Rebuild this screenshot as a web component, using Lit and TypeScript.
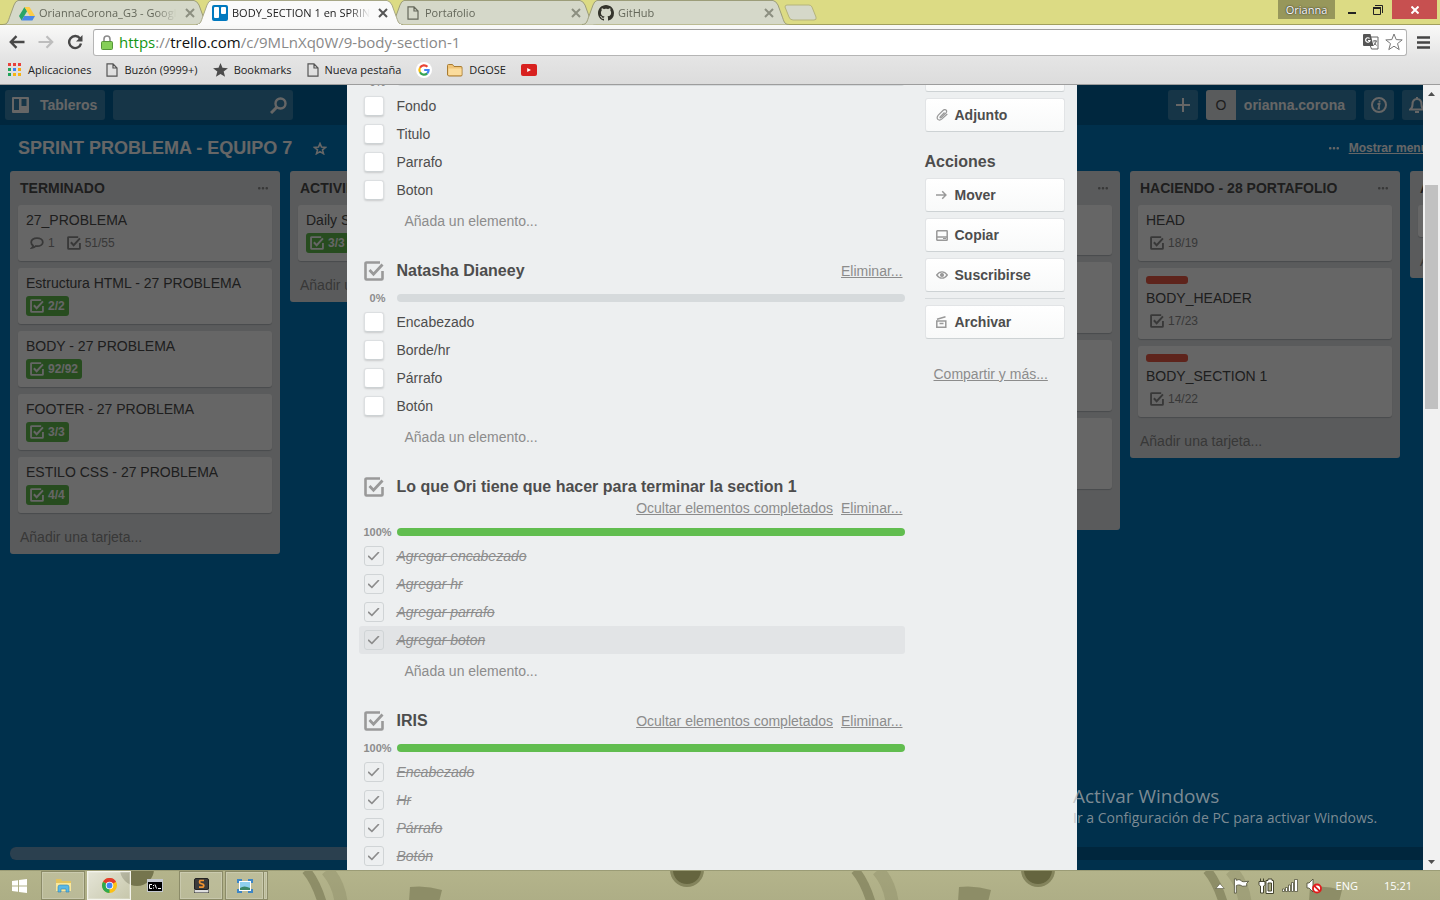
import { LitElement, html, css, svg, nothing } from "lit";
import { customElement, property } from "lit/decorators.js";
import { classMap } from "lit/directives/class-map.js";
import { styleMap } from "lit/directives/style-map.js";

const checkIcon = (size: number) => html`
  <svg width=${size} height=${size} viewBox="0 0 20 20" fill="none" stroke="currentColor" aria-hidden="true">
    <path stroke-width="2.600" stroke-linejoin="round" d="M16 1.500H2.500a1 1 0 0 0-1 1v15a1 1 0 0 0 1 1h15a1 1 0 0 0 1-1V10" />
    <path stroke-width="2.800" d="M5.500 9l4 4.200L18.500 3.500" />
  </svg>`;

const dotsIcon = html`
  <svg width="10" height="3" viewBox="0 0 10 3" fill="currentColor" aria-hidden="true">
    <rect width="2.500" height="2.500" x="0" y="0" rx="1" /><rect width="2.500" height="2.500" x="3.750" y="0" rx="1" /><rect width="2.500" height="2.500" x="7.500" y="0" rx="1" />
  </svg>`;

const closeIcon = html`
  <svg width="10" height="10" viewBox="0 0 10 10" fill="none" stroke="currentColor" stroke-width="2" aria-hidden="true">
    <path d="M1 1l8 8M9 1L1 9" />
  </svg>`;

const pageIcon = html`
  <svg width="12" height="14" viewBox="0 0 12 14" fill="none" stroke="currentColor" stroke-width="1.200" aria-hidden="true">
    <path d="M1 .8h6L11 5v8.200H1zM7 .8V5h4" />
  </svg>`;

/* ---------- Browser frame ---------- */

interface Tab { icon: unknown; title: string; active?: boolean; }

const driveIcon = html`
  <svg width="16" height="15" viewBox="0 0 16 15" aria-hidden="true">
    <path fill="#2aa567" d="M5.500 1L0 10l2.600 4.400L8.200 5z" />
    <path fill="#fccd48" d="M5.500 1h5L16 10h-5.200z" />
    <path fill="#4b87e8" d="M5.200 10H16l-2.600 4.400H2.600z" />
  </svg>`;
const trelloIcon = html`
  <svg width="16" height="16" viewBox="0 0 16 16" aria-hidden="true">
    <rect width="16" height="16" rx="2" fill="#0079bf" />
    <rect x="2" y="2" width="5" height="11" rx="1" fill="#fff" /><rect x="9" y="2" width="5" height="7" rx="1" fill="#fff" />
  </svg>`;
const githubIcon = html`
  <svg width="16" height="16" viewBox="0 0 16 16" fill="#34342c" aria-hidden="true">
    <path d="M8 0C3.58 0 0 3.58 0 8c0 3.54 2.29 6.53 5.47 7.59.4.07.55-.17.55-.38 0-.19-.01-.82-.01-1.49-2.01.37-2.53-.49-2.69-.94-.09-.23-.48-.94-.82-1.13-.28-.15-.68-.52-.01-.53.63-.01 1.08.58 1.23.82.72 1.21 1.87.87 2.33.66.07-.52.28-.87.51-1.07-1.78-.2-3.64-.89-3.64-3.95 0-.87.31-1.59.82-2.15-.08-.2-.36-1.02.08-2.12 0 0 .67-.21 2.2.82.64-.18 1.32-.27 2-.27s1.36.09 2 .27c1.53-1.04 2.2-.82 2.2-.82.44 1.1.16 1.92.08 2.12.51.56.82 1.27.82 2.15 0 3.07-1.87 3.75-3.65 3.95.29.25.54.73.54 1.48 0 1.07-.01 1.93-.01 2.2 0 .21.15.46.55.38A8.01 8.01 0 0 0 16 8c0-4.42-3.58-8-8-8z" />
  </svg>`;

const TABS: Tab[] = [
  { icon: driveIcon, title: "OriannaCorona_G3 - Google Drive" },
  { icon: trelloIcon, title: "BODY_SECTION 1 en SPRINT", active: true },
  { icon: pageIcon, title: "Portafolio" },
  { icon: githubIcon, title: "GitHub" },
];

const appsIcon = html`
  <svg width="14" height="14" viewBox="0 0 14 14" aria-hidden="true">
    <g fill="#e8413b"><rect width="3" height="3" /><rect x="5" width="3" height="3" /><rect x="10" width="3" height="3" /><rect x="10" y="5" width="3" height="3" fill="#f6a914" /></g>
    <g fill="#21a45a"><rect y="5" width="3" height="3" /><rect y="10" width="3" height="3" /></g>
    <rect x="5" y="5" width="3" height="3" fill="#3b83f6" />
    <g fill="#f6b414"><rect x="5" y="10" width="3" height="3" /><rect x="10" y="10" width="3" height="3" /></g>
  </svg>`;
const starIcon = html`
  <svg width="15" height="14" viewBox="0 0 16 15" fill="#4c4c4c" aria-hidden="true">
    <path d="M8 0l2.100 5.200 5.900.4-4.600 3.600 1.500 5.600L8 11.700l-4.900 3.100 1.500-5.600L0 5.600l5.900-.4z" />
  </svg>`;
const googleIcon = html`
  <svg width="16" height="16" viewBox="0 0 16 16" fill="none" stroke-width="2.200" aria-hidden="true">
    <circle cx="8" cy="8" r="8" fill="#fff" />
    <path stroke="#e94435" d="M11.400 4.800A4.600 4.600 0 0 0 4 5.800" /><path stroke="#fabb08" d="M4 5.800a4.600 4.600 0 0 0 0 4.500" />
    <path stroke="#34a453" d="M4 10.300a4.600 4.600 0 0 0 7.200 1.100" /><path stroke="#4284f3" d="M11.200 11.400A4.600 4.600 0 0 0 12.600 8H8.200" />
  </svg>`;
const folderIcon = html`
  <svg width="16" height="14" viewBox="0 0 16 14" aria-hidden="true">
    <path fill="#f0c478" stroke="#a87c32" d="M.5 12V2.500a1 1 0 0 1 1-1h4l1.500 2h7a1 1 0 0 1 1 1V12a1 1 0 0 1-1 1h-12a1 1 0 0 1-1-1z" />
    <path fill="#fbdc9c" d="M1.500 5.500h13V12h-13z" />
  </svg>`;
const youtubeIcon = html`
  <svg width="16" height="12" viewBox="0 0 16 12" aria-hidden="true">
    <rect width="16" height="12" rx="2" fill="#d8211f" /><path d="M6.200 4v4L10 6z" fill="#fff" />
  </svg>`;

@customElement("browser-frame")
export class BrowserFrame extends LitElement {
  static styles = css`
    :host { display: block; font: 11px/16px "Open Sans", "Noto Sans", sans-serif; color: #111; }
    button { border: 0; margin: 0; padding: 0; background: none; color: inherit; font: inherit; display: flex; align-items: center; justify-content: center; }
    svg { display: block; flex: none; }
    .strip { display: flex; height: 25px; background: #dcdb84; box-shadow: inset 0 -1px #a19f5d; padding-left: 3px; }
    .tab { display: grid; width: 207px; height: 25px; margin-right: -14px; color: #64675a; }
    .tab.active { position: relative; z-index: 1; color: #222; }
    .shape, .label { grid-area: 1 / 1; min-width: 0; }
    .label { display: flex; align-items: center; gap: 4px; padding: 1px 15px 0 16px; }
    .favicon { width: 16px; display: flex; justify-content: center; flex: none; }
    .title { flex: 1; min-width: 0; overflow: hidden; white-space: nowrap; mask-image: linear-gradient(to right, #000 82%, transparent 97%); color: inherit; text-decoration: none; }
    .close { color: #8c8f80; }
    .active .close { color: #555; }
    .new { align-self: flex-start; margin: 4px 0 0 9px; }
    .controls { display: flex; margin-left: auto; align-items: flex-start; padding-right: 3px; }
    .who { width: 57px; height: 19px; background: #97975b; color: #fff; text-shadow: 0 0 2px #333, 0 0 1px #333; }
    .win { width: 26px; height: 19px; margin-left: 4px; color: #222; }
    .win.restore { margin-left: 0; }
    .win.quit { width: 45px; margin-left: 1px; background: #c75050; color: #fff; }
    .bar { display: flex; align-items: center; height: 34px; padding: 0 8px 0 6px; background: linear-gradient(#f9f9f8, #e4e4e4); gap: 7px; }
    .nav { width: 22px; height: 22px; color: #484848; }
    .nav.off { color: #bdbdbd; }
    .omnibox { flex: 1; display: flex; align-items: center; height: 27px; box-sizing: border-box; border: 1px solid #b5b5b5; border-top-color: #9f9f9f; border-radius: 3px; background: #fff; padding: 0 3px 0 7px; gap: 6px; }
    .url { flex: 1; font-size: 15px; line-height: 20px; white-space: nowrap; color: #888; text-decoration: none; }
    .secure { color: #149614; }
    .domain { color: #111; }
    .menu { width: 18px; height: 22px; color: #444; }
    .marks { display: flex; align-items: center; height: 26px; box-sizing: border-box; padding: 0 8px 3px; background: linear-gradient(#e4e4e4, #dcdcdc); border-bottom: 1px solid #9d9d9d; gap: 15px; }
    .mark { display: flex; align-items: center; gap: 6px; color: #222; text-decoration: none; white-space: nowrap; }
    .doc { color: #555; display: flex; }
  `;

  private tab(t: Tab) {
    return html`
      <div class=${classMap({ tab: true, active: !!t.active })}>
        <svg class="shape" width="207" height="25" viewBox="0 0 207 25" aria-hidden="true">
          <path d="M0 24.500C5 24.500 5 21 7 16L11 5Q12.500 1 15 .5H191Q194 1 196 5L200 16C202 21 202 24.500 207 24.500"
            fill=${t.active ? "#fafafa" : "#d5d8c9"} stroke=${t.active ? "#a8a887" : "#9c9d79"} />
          ${t.active ? svg`<path d="M2 24.500H205" stroke="#fafafa" />` : nothing}
        </svg>
        <div class="label">
          <span class="favicon">${t.icon}</span><a class="title" href="#">${t.title}</a>
          <button class="close" aria-label="Cerrar">${closeIcon}</button>
        </div>
      </div>`;
  }

  render() {
    return html`
      <div class="strip">
        ${TABS.map((t) => this.tab(t))}
        <button class="new" aria-label="Nueva">
          <svg width="34" height="17" viewBox="0 0 34 17"><path d="M3 1h22q2 0 3 2l4 10q1 3-2 3H9q-3 0-4-3L1 3Q1 1 3 1z" fill="#d5d8c9" stroke="#b5b47c" /></svg>
        </button>
        <div class="controls">
          <button class="who">Orianna</button>
          <button class="win" aria-label="Minimizar"><svg width="8" height="10"><path d="M0 7h8v2H0z" fill="currentColor" /></svg></button>
          <button class="win restore" aria-label="Restaurar">
            <svg width="10" height="10" viewBox="0 0 10 10" fill="none" stroke="currentColor"><path d="M2 .5h7.500V8M.5 3h7v6.500h-7z" /><path d="M0 3h8" stroke-width="2" /></svg>
          </button>
          <button class="win quit" aria-label="Salir"><svg width="8" height="8" viewBox="0 0 8 8" stroke="currentColor" stroke-width="2"><path d="M.5 .5l7 7M7.500 .5l-7 7" /></svg></button>
        </div>
      </div>
      <div class="bar">
        <button class="nav" aria-label="Atrás"><svg width="16" height="14" viewBox="0 0 16 14" fill="none" stroke="currentColor" stroke-width="2.400"><path d="M15.500 7H2M7.500 1.200L1.800 7l5.700 5.800" /></svg></button>
        <button class="nav off" aria-label="Adelante"><svg width="16" height="14" viewBox="0 0 16 14" fill="none" stroke="currentColor" stroke-width="2.200"><path d="M.5 7H14M8.500 1.200L14.200 7l-5.700 5.800" /></svg></button>
        <button class="nav" aria-label="Recargar"><svg width="16" height="16" viewBox="0 0 16 16"><path d="M13 4.500A6 6 0 1 0 14 9.500" fill="none" stroke="currentColor" stroke-width="2.400" /><path d="M15.500 1v6.500H9z" fill="currentColor" /></svg></button>
        <div class="omnibox">
          <svg width="12" height="15" viewBox="0 0 12 15" aria-hidden="true"><path d="M3 7V4a3 3 0 0 1 6 0v3" fill="none" stroke="#8c8c8c" stroke-width="1.600" /><rect x=".5" y="6.500" width="11" height="8" rx="1" fill="#85cf58" stroke="#56963a" /></svg>
          <a class="url" href="#"><span class="secure">https</span>://<span class="domain">trello.com</span>/c/9MLnXq0W/9-body-section-1</a>
          <svg width="16" height="16" viewBox="0 0 16 16" aria-hidden="true">
            <path d="M7.500 3H15v12H8.500L7 11z" fill="#fff" stroke="#666" /><path d="M0 1q0-1 1-1h6.500l3 12H1q-1 0-1-1z" fill="#555" />
            <path d="M6.500 4.500A2.200 2.200 0 1 0 7 6.500H5" fill="none" stroke="#fff" stroke-width="1.200" /><path d="M10 7h4M12 6v1M13.300 7q-.5 3-3 4.500M11 8.500l2.500 3" fill="none" stroke="#666" />
          </svg>
          <svg width="18" height="18" viewBox="0 0 18 18" aria-hidden="true"><path d="M9 1l2.200 5.600 6 .3-4.700 3.700 1.700 6L9 13.200l-5.200 3.400 1.700-6L.8 6.900l6-.3z" fill="#fff" stroke="#777" stroke-linejoin="round" /></svg>
        </div>
        <button class="menu" aria-label="Menú"><svg width="13" height="13" viewBox="0 0 13 13"><path d="M0 1.500h13M0 6.500h13M0 11.500h13" stroke="currentColor" stroke-width="2.600" /></svg></button>
      </div>
      <nav class="marks">
        <a class="mark" href="#">${appsIcon}Aplicaciones</a>
        <a class="mark" href="#"><span class="doc">${pageIcon}</span>Buzón (9999+)</a>
        <a class="mark" href="#">${starIcon}Bookmarks</a>
        <a class="mark" href="#"><span class="doc">${pageIcon}</span>Nueva pestaña</a>
        <a class="mark" href="#" aria-label="Google">${googleIcon}</a>
        <a class="mark" href="#">${folderIcon}DGOSE</a>
        <a class="mark" href="#" aria-label="YouTube">${youtubeIcon}</a>
      </nav>`;
  }
}

/* ---------- Board ---------- */

interface Card { title?: string; comments?: number; tasks?: string; done?: boolean; label?: boolean; height?: number; }
interface List { name: string; cards: Card[]; }

const LISTS: List[] = [
  { name: "TERMINADO", cards: [
    { title: "27_PROBLEMA", comments: 1, tasks: "51/55" },
    { title: "Estructura HTML - 27 PROBLEMA", tasks: "2/2", done: true },
    { title: "BODY - 27 PROBLEMA", tasks: "92/92", done: true },
    { title: "FOOTER - 27 PROBLEMA", tasks: "3/3", done: true },
    { title: "ESTILO CSS - 27 PROBLEMA", tasks: "4/4", done: true },
  ] },
  { name: "ACTIVIDADES", cards: [{ title: "Daily Scrum", tasks: "3/3", done: true }] },
  { name: "", cards: [{ height: 50 }] },
  { name: "", cards: [{ height: 50 }, { height: 71 }, { height: 71 }, { height: 71 }] },
  { name: "HACIENDO - 28 PORTAFOLIO", cards: [
    { title: "HEAD", tasks: "18/19" },
    { title: "BODY_HEADER", tasks: "17/23", label: true },
    { title: "BODY_SECTION 1", tasks: "14/22", label: true },
  ] },
  { name: "A", cards: [{ height: 32 }] },
];

@customElement("trello-board")
export class TrelloBoard extends LitElement {
  static styles = css`
    :host { display: flex; flex-direction: column; min-width: 0; overflow: hidden; background: #0079bf; color: #4d4d4d; font: 14px/18px "Liberation Sans", Arial, sans-serif; }
    button { border: 0; margin: 0; padding: 0; background: none; color: inherit; font: inherit; display: flex; align-items: center; }
    svg { display: block; flex: none; }
    a { color: inherit; }
    .top { display: flex; align-items: center; justify-content: space-between; height: 40px; padding: 0 8px 0 5px; background: rgba(0, 0, 0, .18); color: #fff; font-weight: 700; }
    .side { display: flex; gap: 8px; }
    .pill { height: 30px; border-radius: 3px; background: rgba(255, 255, 255, .22); color: #fff; overflow: hidden; }
    .boards { gap: 11px; padding: 0 8px 0 7px; }
    .search { display: flex; align-items: center; width: 180px; box-sizing: border-box; padding-right: 6px; }
    .query { flex: 1; min-width: 0; border: 0; padding: 0 8px; height: 30px; background: none; color: #fff; font: inherit; outline: 0; }
    .square { width: 30px; justify-content: center; }
    .member { padding-right: 11px; gap: 8px; }
    .avatar { width: 30px; height: 30px; line-height: 30px; text-align: center; background: #dfe3e6; color: #4d4d4d; font-weight: 400; }
    .head { display: flex; align-items: center; height: 46px; padding: 0 12px 0 18px; color: #fff; }
    h1 { margin: 0; font-size: 18px; line-height: 24px; font-weight: 700; }
    .star { margin-left: 21px; }
    .show { margin-left: auto; display: flex; align-items: center; gap: 10px; font-size: 12px; font-weight: 700; }
    .lists { flex: 1; min-height: 0; display: flex; align-items: flex-start; gap: 10px; padding-left: 10px; }
    .list { flex: none; width: 270px; border-radius: 3px; background: #e2e4e6; }
    .list-head { display: flex; align-items: center; justify-content: space-between; height: 34px; padding: 0 12px 0 10px; }
    .dots { color: #8c8c8c; }
    h2 { margin: 0; font-size: 14px; line-height: 18px; font-weight: 700; }
    .cards { display: flex; flex-direction: column; gap: 7px; padding: 0 8px; }
    .card { box-sizing: border-box; border-radius: 3px; background: #fff; box-shadow: 0 1px 1px #b6bbbf; padding: 6px 8px 8px; }
    .label { width: 42px; height: 8px; margin: 2px 0 5px; border-radius: 3px; background: #eb5a46; }
    .badges { display: flex; gap: 4px; margin-top: 4px; font-size: 12px; line-height: 20px; color: #8c8c8c; }
    .badge { display: flex; align-items: center; gap: 4px; padding: 0 4px; border-radius: 3px; }
    .badge.done { background: #61bd4f; color: #fff; font-weight: 700; }
    .add { height: 41px; padding: 7px 10px 0; color: #8c8c8c; }
    .scroll { flex: none; height: 13px; margin: 0 10px 10px; border-radius: 6px; background: rgba(0, 0, 0, .2); }
    .thumb { width: 60%; height: 100%; border-radius: 6px; background: #6da0c5; }
  `;

  private card(c: Card) {
    if (c.height) return html`<div class="card" style=${styleMap({ height: `${c.height}px` })}></div>`;
    return html`
      <div class="card">
        ${c.label ? html`<div class="label"></div>` : nothing}
        <div>${c.title}</div>
        <div class="badges">
          ${c.comments ? html`<span class="badge"><svg width="14" height="12" viewBox="0 0 14 12" fill="none" stroke="currentColor" stroke-width="1.800"><path d="M7 1.200c3.300 0 5.800 1.700 5.800 4s-2.500 4-5.800 4H5.500Q4.500 10.500 2 10.800 3.300 9.500 3 8.500C1.800 7.700 1.200 6.500 1.200 5.200c0-2.300 2.500-4 5.800-4z" /></svg>${c.comments}</span>` : nothing}
          <span class=${classMap({ badge: true, done: !!c.done })}>${checkIcon(14)}${c.tasks}</span>
        </div>
      </div>`;
  }

  render() {
    return html`
      <header class="top">
        <div class="side">
          <button class="pill boards">
            <svg width="17" height="16" viewBox="0 0 17 16"><path fill="#fff" fill-rule="evenodd" d="M1 0h15q1 0 1 1v14q0 1-1 1H1q-1 0-1-1V1q0-1 1-1zM2 2v11h5V2zM9.500 2v7h5V2z" /></svg>Tableros
          </button>
          <div class="pill search">
            <input class="query" type="text" aria-label="Buscar" />
            <svg width="17" height="17" viewBox="0 0 17 17" fill="none" stroke="#fff" stroke-width="2.400"><circle cx="10.500" cy="6.500" r="5" /><path d="M7 10L1 16" stroke-width="3" /></svg>
          </div>
        </div>
        <div class="side">
          <button class="pill square" aria-label="Crear"><svg width="14" height="14" viewBox="0 0 14 14" stroke="#fff" stroke-width="2"><path d="M7 0v14M0 7h14" /></svg></button>
          <button class="pill member"><span class="avatar">O</span>orianna.corona</button>
          <button class="pill square" aria-label="Información">
            <svg width="16" height="16" viewBox="0 0 16 16" fill="none" stroke="#fff" stroke-width="2"><circle cx="8" cy="8" r="7" /><path d="M6.500 7H8.500L7.500 11.500H9M8.500 3.500V5.500" stroke-width="1.800" /></svg>
          </button>
          <button class="pill square" aria-label="Notificaciones">
            <svg width="16" height="16" viewBox="0 0 16 16" fill="none" stroke="#fff" stroke-width="2"><path d="M1 12.500h14Q12.500 11 12.500 7.500C12.500 4 11 2 8 2S3.500 4 3.500 7.500Q3.500 11 1 12.500zM6 15h4M8 0v2" /></svg>
          </button>
        </div>
      </header>
      <div class="head">
        <h1>SPRINT PROBLEMA - EQUIPO 7</h1>
        <button class="star" aria-label="Favorito"><svg width="14" height="13" viewBox="0 0 14 13" fill="none" stroke="#fff" stroke-width="1.600"><path d="M7 1.500l1.500 3.600 4 .3-3 2.500 1 3.800L7 9.600l-3.500 2.100 1-3.800-3-2.500 4-.3z" /></svg></button>
        <span class="show">${dotsIcon}<a href="#">Mostrar menú</a></span>
      </div>
      <div class="lists">
        ${LISTS.map((l) => html`
          <section class="list">
            <div class="list-head"><h2>${l.name}</h2><button class="dots" aria-label="Opciones">${dotsIcon}</button></div>
            <div class="cards">${l.cards.map((c) => this.card(c))}</div>
            <button class="add">${l.name ? "Añadir una tarjeta..." : nothing}</button>
          </section>`)}
      </div>
      <div class="scroll"><div class="thumb"></div></div>`;
  }
}

/* ---------- Card window ---------- */

interface Checklist { name?: string; percent: number; items: string[]; hovered?: number; }

const CHECKLISTS: Checklist[] = [
  { percent: 0, items: ["Fondo", "Titulo", "Parrafo", "Boton"] },
  { name: "Natasha Dianeey", percent: 0, items: ["Encabezado", "Borde/hr", "Párrafo", "Botón"] },
  { name: "Lo que Ori tiene que hacer para terminar la section 1", percent: 100, hovered: 3,
    items: ["Agregar encabezado", "Agregar hr", "Agregar parrafo", "Agregar boton"] },
  { name: "IRIS", percent: 100, items: ["Encabezado", "Hr", "Párrafo", "Botón"] },
];

const clipIcon = html`<svg width="12" height="12" viewBox="0 0 12 12" fill="none" stroke="currentColor" stroke-width="1.200"><path d="M8.500 3.500L4.200 7.800q-.5 1 .3 1 .5 0 1-.5L10 3.800q1.300-1.700 0-2.800-1.400-1-2.800.3L2.300 6.200q-2 2.400-.5 4.200 1.800 1.500 4.200-.5L11.300 5" /></svg>`;
const arrowIcon = html`<svg width="11" height="10" viewBox="0 0 12 10" fill="none" stroke="currentColor" stroke-width="1.600"><path d="M0 5h10.500M6.800 1L10.800 5 6.800 9" /></svg>`;
const copyIcon = html`<svg width="12" height="11" viewBox="0 0 12 11" fill="none" stroke="currentColor" stroke-width="1.500"><rect x=".8" y=".8" width="10.400" height="9.400" rx=".5" /><path d="M1 7h10" /><path d="M7 8.500h3" stroke-width="1" /></svg>`;
const eyeIcon = html`<svg width="12" height="8" viewBox="0 0 12 8" fill="none" stroke="currentColor" stroke-width="1.300"><path d="M.7 4Q3 .8 6 .8T11.300 4Q9 7.200 6 7.200T.7 4z" /><circle cx="6" cy="4" r="1.400" fill="currentColor" /></svg>`;
const archiveIcon = html`<svg width="11" height="12" viewBox="0 0 11 12" fill="none" stroke="currentColor" stroke-width="1.500"><path d="M1 3.200L9.500 .8M.8 5h9v6.200h-9zM3.500 7.500h4" /></svg>`;

@customElement("card-window")
export class CardWindow extends LitElement {
  @property({ attribute: false }) lists: Checklist[] = CHECKLISTS;

  static styles = css`
    :host { display: block; width: 730px; margin: 0 auto; overflow: hidden; background: #edeff0; color: #4d4d4d; font: 14px/18px "Liberation Sans", Arial, sans-serif; }
    svg { display: block; flex: none; }
    .scrolled { display: flex; gap: 20px; margin-top: -27px; padding: 0 12px; }
    .main { flex: 1; min-width: 0; padding-top: 14px; display: flex; flex-direction: column; gap: 21px; }
    .head { display: flex; gap: 13px; margin-bottom: 5px; padding-left: 5px; color: #999; }
    .head svg { margin-top: 2px; }
    .titles { flex: 1; display: flex; flex-wrap: wrap; align-items: center; column-gap: 8px; padding-right: 2px; }
    h3 { margin: 0 auto 0 0; font-size: 16px; line-height: 24px; font-weight: 700; color: #4d4d4d; }
    .options { display: flex; gap: 8px; margin-left: auto; }
    a { color: #8c8c8c; }
    .progress { display: flex; align-items: center; height: 20px; gap: 4px; }
    .percent { width: 34px; box-sizing: border-box; padding-left: 4px; text-align: center; font-size: 11px; font-weight: 700; line-height: 20px; color: #8c8c8c; }
    .track { flex: 1; height: 8px; border-radius: 4px; background: #d6dadc; overflow: hidden; }
    .fill { height: 100%; background: #61bd4f; }
    .item { display: flex; align-items: center; gap: 13px; height: 28px; padding-left: 5px; border-radius: 3px; }
    .item.hover { background: #e2e4e6; }
    .box { appearance: none; flex: none; box-sizing: border-box; display: grid; place-items: center; width: 20px; height: 20px; margin: 0; border-radius: 3px; background: #fff; border: 1px solid #dcdfe1; border-bottom-color: #cdd2d4; box-shadow: 0 1px 2px rgba(0, 0, 0, .15); }
    .box:checked { background: transparent; border-color: #d0d4d6; box-shadow: none; }
    .box:checked::before { content: ""; width: 12px; height: 9px; background: #8c8c8c; clip-path: polygon(0 55%, 10% 43%, 36% 76%, 90% 0, 100% 10%, 37% 100%); }
    .box:checked + .text { font-style: italic; text-decoration: line-through; color: #8c8c8c; }
    .text { flex: 1; }
    button { font: inherit; color: inherit; margin: 0; border: 0; background: none; }
    .add { display: block; height: 34px; padding: 0 46px; color: #8c8c8c; }
    .side { width: 140px; flex: none; display: flex; flex-direction: column; gap: 6px; }
    .action { display: flex; align-items: center; gap: 7px; height: 34px; padding: 0 10px; box-sizing: border-box; border: 1px solid #e2e4e6; border-bottom-color: #cdd2d4; border-radius: 3px; background: linear-gradient(#fff, #f8f9f9); font-weight: 700; }
    .glyph { width: 12px; display: flex; justify-content: center; color: #999; }
    h4 { margin: 14px 0 0; font-size: 16px; line-height: 20px; font-weight: 700; height: 20px; }
    hr { width: 100%; margin: 0; border: 0; height: 1px; background: #d6dadc; }
    .more { align-self: flex-start; margin: 20px 0 0 9px; }
  `;

  private action(icon: unknown, text: string) {
    return html`<button class="action"><span class="glyph">${icon}</span>${text}</button>`;
  }

  private checklist(l: Checklist, n: number) {
    const done = l.percent === 100;
    return html`
      <section>
        ${l.name ? html`
          <div class="head">
            ${checkIcon(20)}
            <div class="titles">
              <h3>${l.name}</h3>
              <div class="options">
                ${done ? html`<a href="#">Ocultar elementos completados</a>` : nothing}
                <a href="#">Eliminar...</a>
              </div>
            </div>
          </div>` : nothing}
        <div class="progress">
          <span class="percent">${l.percent}%</span>
          <div class="track"><div class="fill" style=${styleMap({ width: `${l.percent}%` })}></div></div>
        </div>
        ${l.items.map((text, i) => html`
          <div class=${classMap({ item: true, hover: l.hovered === i })}>
            <input class="box" type="checkbox" id="item-${n}-${i}" .checked=${done} />
            <label class="text" for="item-${n}-${i}">${text}</label>
          </div>`)}
        <button class="add">Añada un elemento...</button>
      </section>`;
  }

  render() {
    return html`
      <div class="scrolled">
        <div class="main">${this.lists.map((l, n) => this.checklist(l, n))}</div>
        <aside class="side">
          <button class="action"></button>
          ${this.action(clipIcon, "Adjunto")}
          <h4>Acciones</h4>
          ${this.action(arrowIcon, "Mover")}
          ${this.action(copyIcon, "Copiar")}
          ${this.action(eyeIcon, "Suscribirse")}
          <hr />
          ${this.action(archiveIcon, "Archivar")}
          <a class="more" href="#">Compartir y más...</a>
        </aside>
      </div>`;
  }
}

/* ---------- Taskbar ---------- */

@customElement("task-bar")
export class TaskBar extends LitElement {
  static styles = css`
    :host { display: grid; height: 30px; overflow: hidden; background: linear-gradient(#b4b48b, #aeae86); font: 11px/16px "Open Sans", "Noto Sans", sans-serif; color: #fff; }
    svg { display: block; flex: none; }
    .wall, .row { grid-area: 1 / 1; }
    .row { display: flex; align-items: stretch; border-top: 1px solid #9b9c76; }
    button { border: 0; margin: 0; padding: 0; background: none; color: inherit; font: inherit; display: flex; align-items: center; justify-content: center; }
    .app { width: 44px; margin-right: 2px; box-sizing: border-box; }
    .start { width: 39px; }
    .open { border: 1px solid #8b8b68; background: rgba(255, 255, 255, .14); box-shadow: inset 0 0 0 1px rgba(255, 255, 255, .2); }
    .active { border-color: #f4f4ec; background: linear-gradient(135deg, rgba(255, 255, 255, .65), rgba(255, 255, 255, .3)); }
    .last { width: 39px; margin-right: 0; }
    .stack { width: 4px; border-left: 0; }
    .tray { margin-left: auto; display: flex; align-items: center; gap: 8px; padding-right: 28px; }
    .lang { margin-left: 6px; }
    .clock { margin-left: 18px; }
  `;

  render() {
    return html`
      <svg class="wall" width="1440" height="30" viewBox="0 0 1440 30" aria-hidden="true">
        <g fill="#65653f"><circle cx="137" cy="-1" r="17" opacity=".8" /><circle cx="687" cy="0" r="17" opacity=".6" /><circle cx="687" cy="0" r="14" /><circle cx="1038" cy="0" r="17" opacity=".6" /><circle cx="1038" cy="0" r="14" /></g>
        <g fill="none" stroke="#85855f">
          <path d="M306 0q10 12 16 32M855 0q10 12 16 32M1207 0q10 12 16 32" stroke-width="9" opacity=".8" />
          <path d="M327 0q12 14 14 32M878 0q12 14 14 32M1231 0q12 14 14 32" stroke-width="13" opacity=".35" />
        </g>
        <g fill="#85855f" opacity=".8"><path d="M410 17q16-2 32 3l-3 12h-30zM959 17q16-2 32 3l-3 12h-30zM1310 17q16-2 32 3l-3 12h-30z" /></g>
      </svg>
      <div class="row">
        <button class="app start" aria-label="Inicio"><svg width="15" height="14" viewBox="0 0 15 14" fill="#fff"><path d="M0 2l6-.8v5.300H0zM7 1l8-1v6.500H7zM0 7.500h6v5.300L0 12zM7 7.500h8V14l-8-1z" /></svg></button>
        <button class="app open" aria-label="Explorador">
          <svg width="17" height="15" viewBox="0 0 17 15"><path d="M1 1h5l1 2h9v10H1z" fill="#e3c35d" /><path d="M1 5h15v8H1z" fill="#f9e79b" /><path d="M3 14V9q0-2 2-2h7q2 0 2 2v5h-3v-3H6v3z" fill="#5cb8e4" stroke="#2e85b5" stroke-width=".6" /></svg>
        </button>
        <button class="app open active" aria-label="Chrome">
          <svg width="15" height="15" viewBox="0 0 16 16"><circle cx="8" cy="8" r="8" fill="#fbc116" /><path d="M8 8L1.100 4A8 8 0 0 1 15 4z" fill="#e33b2e" /><path d="M8 8L8 16A8 8 0 0 1 1.100 4z" fill="#2da94f" /><circle cx="8" cy="8" r="4" fill="#fff" /><circle cx="8" cy="8" r="3.100" fill="#4285f4" /></svg>
        </button>
        <button class="app" aria-label="Consola">
          <svg width="16" height="13" viewBox="0 0 16 13"><rect width="16" height="13" fill="#c4c8cf" /><rect x="1" y="3" width="14" height="9" fill="#000" /><path d="M5 5.500H2.500v4H5M6.500 6v1M6.500 8.500v1M8 5.500l1.500 4M11 9.500h3" stroke="#fff" fill="none" /></svg>
        </button>
        <button class="app open" aria-label="Editor">
          <svg width="15" height="15" viewBox="0 0 15 15"><rect y="10" width="15" height="5" rx="1" fill="#ddd" stroke="#222" /><rect x=".5" y=".5" width="14" height="11" rx="1.500" fill="#3c3c3c" stroke="#222" /><path d="M10 2.500H6Q5 4 6 5.200l3 1q1.500 1.500 0 3H5" fill="none" stroke="#f29330" stroke-width="1.700" /></svg>
        </button>
        <button class="app open last" aria-label="Recortes">
          <svg width="16" height="14" viewBox="0 0 16 14"><path d="M0 0h5v4H0zM11 0h5v4h-5zM0 10h5v4H0zM11 10h5v4h-5z" fill="#3d86c6" /><rect x="2" y="2" width="12" height="10" fill="#fff" /><rect x="3" y="3" width="10" height="8" fill="#8fd0ee" /><path d="M3 9q4-3 10 0v2H3z" fill="#3b8768" /></svg>
        </button>
        <span class="app open stack"></span>
        <div class="tray">
          <svg width="10" height="6" viewBox="0 0 10 6"><path d="M.8 5.500L5 .7l4.200 4.800z" fill="#fff" stroke="#555540" stroke-width=".6" /></svg>
          <svg width="17" height="16" viewBox="0 0 18 16" fill="#fff" stroke="#45452f" stroke-width=".8"><path d="M1.500 .5h2V2q3-1.500 5 0 0 1.500 3 1.500l5-.5q-3 2-2 5-5 1-7-1-2-.5-4 .5v8h-2z" /></svg>
          <svg width="16" height="16" viewBox="0 0 16 16" fill="none" stroke="#45452f"><path d="M2.500 .5v3M5.500 .5v3M1 3.500h6v3q0 1-1.500 1.500v7h-3V8Q1 7.500 1 6.500z" fill="#fff" /><path d="M8 2.500h2V1h4v1.500h1.500v13H8z" fill="#fff" /><path d="M10 5h3.500v8H10z" fill="#a9a983" /></svg>
          <svg width="16" height="13" viewBox="0 0 16 13" fill="#fff" stroke="#45452f" stroke-width=".7"><path d="M.5 10h2v2.500h-2zM3.500 8.500h2v4h-2zM6.500 6h2v6.500h-2zM9.500 3.500h2v9h-2zM12.500 .5h3v12h-3z" /></svg>
          <svg width="16" height="16" viewBox="0 0 16 16"><path d="M1 5h2l4-4v13l-4-4H1z" fill="#fff" stroke="#45452f" stroke-width=".8" /><circle cx="11" cy="10.500" r="4" fill="#fff" stroke="#e11b1b" stroke-width="1.800" /><path d="M8.300 7.800l5.400 5.400" stroke="#e11b1b" stroke-width="1.800" /></svg>
          <span class="lang">ENG</span>
          <span class="clock">15:21</span>
        </div>
      </div>`;
  }
}

/* ---------- Desktop ---------- */

@customElement("app-root")
export class AppRoot extends LitElement {
  static styles = css`
    :host { display: flex; flex-direction: column; height: 100vh; overflow: hidden; }
    .page { flex: 1; min-height: 0; position: relative; display: grid; grid-template: minmax(0, 1fr) / minmax(0, 1fr) 17px; }
    .board { grid-area: 1 / 1 / 2 / 3; }
    .overlay { grid-area: 1 / 1; position: relative; display: flex; overflow: hidden; background: rgba(0, 0, 0, .6); }
    .scrollbar { grid-area: 1 / 2; position: relative; display: flex; flex-direction: column; background: #f1f1f1; padding: 0 2px; }
    .arrow { height: 17px; display: grid; place-items: center; }
    .rail { flex: 1; display: flex; flex-direction: column; }
    .before { flex: 83; }
    .thumb { flex: 224; background: #c1c1c1; }
    .after { flex: 444; }
    .watermark { position: absolute; right: 0; bottom: 42px; width: 367px; color: rgba(180, 180, 180, .7); font-family: "Open Sans", "Noto Sans", sans-serif; white-space: nowrap; }
    .big { font-size: 19px; line-height: 24px; }
    .small { font-size: 14px; line-height: 20px; }
  `;

  render() {
    return html`
      <browser-frame></browser-frame>
      <main class="page">
        <trello-board class="board"></trello-board>
        <div class="overlay"><card-window></card-window></div>
        <div class="scrollbar">
          <div class="arrow"><svg width="7" height="4"><path d="M0 4L3.500 0 7 4z" fill="#505050" /></svg></div>
          <div class="rail"><div class="before"></div><div class="thumb"></div><div class="after"></div></div>
          <div class="arrow"><svg width="7" height="4"><path d="M0 0L3.500 4 7 0z" fill="#505050" /></svg></div>
        </div>
        <div class="watermark"><div class="big">Activar Windows</div><div class="small">Ir a Configuración de PC para activar Windows.</div></div>
      </main>
      <task-bar></task-bar>`;
  }
}
